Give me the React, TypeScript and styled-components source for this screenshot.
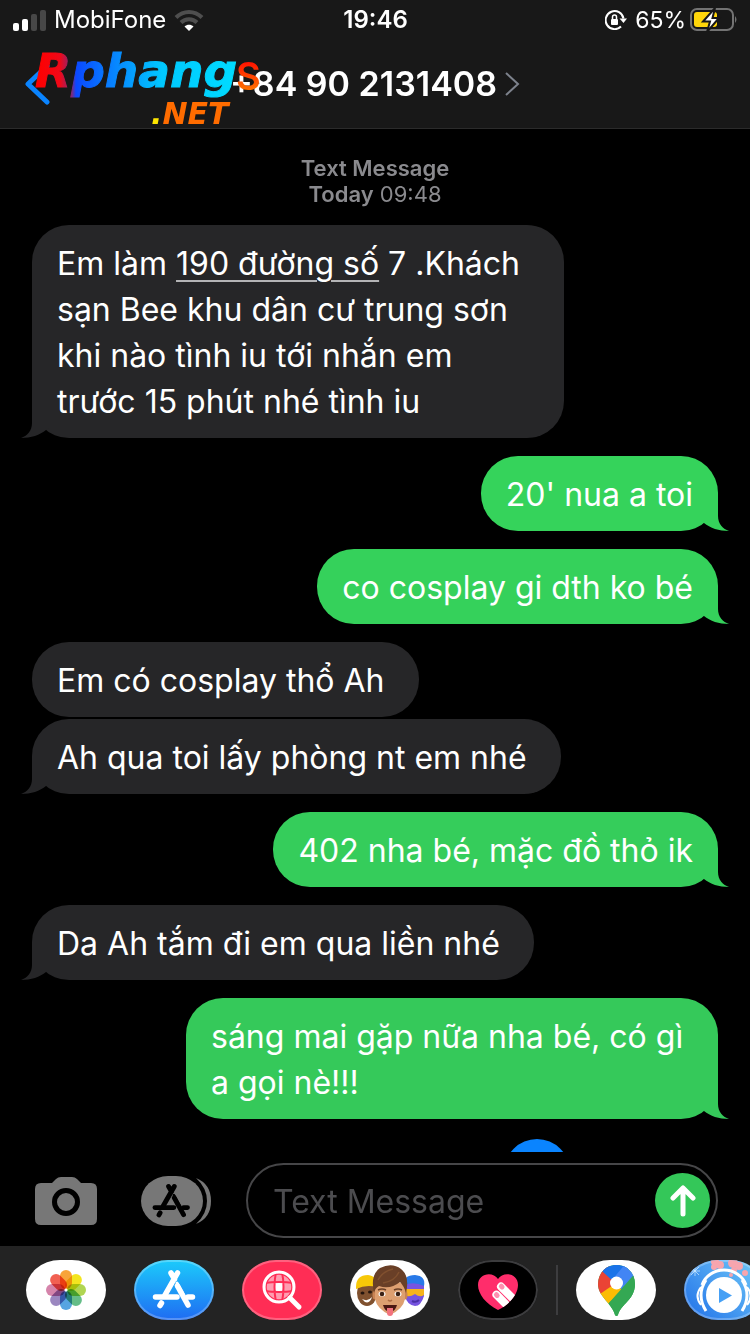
import React from "react";
import styled, { createGlobalStyle } from "styled-components";

const GlobalStyle = createGlobalStyle`
  * { box-sizing: border-box; }
  html, body { margin: 0; background: #000; }
  body { font-family: Inter, "Noto Sans", sans-serif; color: #fff; }
  button { border: 0; padding: 0; background: none; color: inherit; font: inherit; cursor: pointer; }
  svg { display: block; }
`;

const Screen = styled.div`
  display: flex;
  flex-direction: column;
  min-height: 100vh;
  overflow: hidden;
`;

const Header = styled.header`
  position: relative;
  background: #181818;
  border-bottom: 1px solid #2b2b2b;
`;

const StatusBar = styled.div`
  display: grid;
  grid-template-columns: 1fr auto 1fr;
  align-items: center;
  height: 40px;
  padding: 0 12px 0 13px;
  font-size: 24px;
  line-height: 40px;
`;

const StatusGroup = styled.div<{ $end?: boolean }>`
  display: flex;
  align-items: center;
  justify-content: ${(p) => (p.$end ? "flex-end" : "flex-start")};
  gap: ${(p) => (p.$end ? "4px" : "8px")};
`;

const BatteryLevel = styled.span`
  margin-left: 4px;
  font-size: 23px;
`;

const Clock = styled.time`
  font-weight: 600;
`;

const NavBar = styled.nav`
  display: grid;
  grid-template-columns: 1fr auto 1fr;
  align-items: center;
  height: 88px;
  padding: 0 25px;
`;

const BackButton = styled.button`
  justify-self: start;
`;

const ContactButton = styled.button`
  display: flex;
  align-items: center;
  gap: 8px;
`;

const ContactName = styled.h1`
  margin: 0;
  font-size: 34px;
  line-height: 44px;
  font-weight: 600;
`;

const Watermark = styled.svg`
  position: absolute;
  left: 24px;
  top: 44px;
  pointer-events: none;
`;

const Thread = styled.main`
  flex: 1;
  display: flex;
  flex-direction: column;
  padding: 26px 32px 0;
`;

const DayLabel = styled.div`
  margin-bottom: 18px;
  color: #8a8a8e;
  font-size: 22px;
  line-height: 26px;
  text-align: center;
`;

const Strong = styled.span`
  font-weight: 600;
`;

const Bubble = styled.div<{ $sent?: boolean; $joined?: boolean; $fill: string }>`
  position: relative;
  align-self: ${(p) => (p.$sent ? "flex-end" : "flex-start")};
  max-width: 532px;
  margin-bottom: ${(p) => (p.$joined ? "2px" : "18px")};
  padding: ${(p) => (p.$sent ? "16px 25px 13px" : "16px 34px 13px 25px")};
  border-radius: 37px;
  background: ${(p) => p.$fill};
  font-size: 32px;
  line-height: 46px;
`;

const Tail = styled.svg<{ $sent?: boolean }>`
  position: absolute;
  bottom: 0;
  ${(p) => (p.$sent ? "right: -11px;" : "left: -11px; transform: scaleX(-1);")}
`;

const AddressLink = styled.a`
  color: inherit;
  text-decoration: underline;
  text-decoration-color: #b4b4b6;
  text-decoration-thickness: 2px;
  text-underline-offset: 5px;
`;

const NextAction = styled.div`
  align-self: flex-end;
  height: 13px;
  margin: 2px 148px 0 0;
  overflow: hidden;
`;

const RoundAction = styled.button`
  display: block;
  width: 66px;
  height: 66px;
  border-radius: 50%;
  background: #0a84ff;
`;

const Composer = styled.form`
  display: flex;
  align-items: center;
  padding: 11px 32px 8px 35px;
`;

const ToolButton = styled.button<{ $gap: number }>`
  margin-right: ${(p) => p.$gap}px;
`;

const Field = styled.div`
  flex: 1;
  min-width: 0;
  display: flex;
  align-items: center;
  height: 75px;
  padding: 0 6px 0 25px;
  border: 2px solid #464648;
  border-radius: 38px;
`;

const TextInput = styled.input`
  flex: 1;
  min-width: 0;
  border: 0;
  padding: 2px 0 0;
  outline: 0;
  background: none;
  color: #fff;
  font: inherit;
  font-size: 32px;
  line-height: 46px;
  &::placeholder { color: #4c4c4f; opacity: 1; }
`;

const SendButton = styled.button`
  display: grid;
  place-items: center;
  width: 55px;
  height: 55px;
  border-radius: 50%;
  background: #34c759;
`;

const AppStrip = styled.footer`
  display: flex;
  align-items: center;
  padding: 14px 0 14px 26px;
  background: #232323;
  overflow: hidden;
`;

const AppGroup = styled.div`
  display: flex;
  flex-shrink: 0;
  gap: 28px;
`;

const Divider = styled.div`
  flex-shrink: 0;
  width: 2px;
  height: 50px;
  margin: 0 18px;
  background: #3d3d3f;
`;

const AppButton = styled.button<{ $bg: string; $ring?: string }>`
  flex-shrink: 0;
  width: 80px;
  height: 60px;
  border-radius: 34px / 30px;
  overflow: hidden;
  background: ${(p) => p.$bg};
  box-shadow: inset 0 0 0 2px ${(p) => p.$ring || "transparent"};
`;

const SignalIcon = () => (
  <svg width="33" height="21" aria-hidden="true">
    <rect x="0" y="13" width="6" height="8" rx="2" fill="#fff" />
    <rect x="9" y="9" width="6" height="12" rx="2" fill="#fff" />
    <rect x="18" y="4" width="6" height="17" rx="2" fill="#474747" />
    <rect x="27" y="0" width="6" height="21" rx="2" fill="#474747" />
  </svg>
);

const WifiIcon = () => (
  <svg width="30" height="22" viewBox="0 0 30 22" fill="none" aria-hidden="true">
    <path d="M2 8.5C9.500 1 20.500 1 28 8.500" stroke="#4e4e4e" strokeWidth="4" />
    <path d="M7 13.500C11.500 9 18.500 9 23 13.500" stroke="#4e4e4e" strokeWidth="4" />
    <path d="M10.500 17.500C13 15 17 15 19.500 17.500L15 22Z" fill="#fff" />
  </svg>
);

const LockIcon = () => (
  <svg width="22" height="20" viewBox="0 0 22 20" fill="none" aria-hidden="true">
    <path d="M16 16.500A9 9 0 1 1 18.500 8.500" stroke="#fff" strokeWidth="2" />
    <path d="M14.500 8.500H22L18.500 13Z" fill="#fff" />
    <rect x="6" y="9" width="7" height="6" rx="1" fill="#fff" />
    <path d="M7.500 9V7A2 2 0 0 1 11.500 7V9" stroke="#fff" strokeWidth="1.500" />
  </svg>
);

const BatteryIcon = () => (
  <svg width="48" height="24" viewBox="0 0 48 24" aria-hidden="true">
    <rect x="1" y="1" width="42" height="21" rx="6" fill="none" stroke="#737373" strokeWidth="2" />
    <path d="M45 8Q48 11.500 45 15Z" fill="#737373" />
    <rect x="4" y="4" width="23" height="15" rx="3" fill="#ffd60a" />
    <path d="M25 0L13 13.500H20L17 24L29 10H22.500Z" fill="#fff" stroke="#181818" strokeWidth="2" />
  </svg>
);

const WatermarkLogo = () => (
  <Watermark width="240" height="86" viewBox="0 0 240 86" role="img" aria-label="Rphangs.NET">
    <defs>
      <linearGradient id="wmMain" gradientUnits="userSpaceOnUse" x1="14" y1="0" x2="214" y2="0">
        <stop offset="0" stopColor="#ff0000" />
        <stop offset="0.110" stopColor="#f00818" />
        <stop offset="0.170" stopColor="#7a2a80" />
        <stop offset="0.190" stopColor="#0a48ff" />
        <stop offset="0.350" stopColor="#087cff" />
        <stop offset="0.620" stopColor="#00c8ff" />
        <stop offset="1" stopColor="#00dcff" />
      </linearGradient>
      <linearGradient id="wmS" x1="0" y1="0" x2="0" y2="1">
        <stop offset="0.200" stopColor="#ff1200" />
        <stop offset="0.850" stopColor="#ff7a00" />
      </linearGradient>
    </defs>
    <g fontFamily="'DejaVu Sans', sans-serif" fontWeight="700" fontStyle="italic">
      <text x="11" y="43" fontSize="47" fill="url(#wmMain)" stroke="url(#wmMain)" strokeWidth="1">Rphang</text>
      <text x="127" y="80" fontSize="30" fill="#ff6c00"><tspan fill="#ffe600">.</tspan>NET</text>
    </g>
    <text x="212" y="46" fontSize="38" fontFamily="Inter, sans-serif" fontWeight="600" fill="url(#wmS)">S</text>
  </Watermark>
);

const StoreGlyph = ({ color }: { color: string }) => (
  <g fill="none" stroke={color} strokeWidth="5.500" strokeLinecap="round">
    <path d="M37 13L40.500 19M43.500 13L31 35" />
    <path d="M21.500 37H43M54 37H58.500" />
    <path d="M27.500 43L26 45.500" />
    <path d="M43.500 26L54 45" />
    <path d="M43 23L50 36" strokeWidth="3" />
  </g>
);

const PhotosIcon = () => {
  const petals = ["#f8981d", "#f2e200", "#a5cf3a", "#4fb477", "#3f97dd", "#8d76b8", "#d0739f", "#ef4a3a"];
  return (
    <svg width="80" height="60" aria-hidden="true">
      {petals.map((c, i) => (
        <rect key={c} x="34" y="10" width="12" height="19" rx="6" fill={c} opacity="0.880"
          transform={`rotate(${i * 45} 40 30)`} style={{ mixBlendMode: "multiply" }} />
      ))}
      <circle cx="40" cy="30" r="1.500" fill="#fff" />
    </svg>
  );
};

const ImagesIcon = () => (
  <svg width="80" height="60" fill="none" aria-hidden="true">
    <circle cx="37" cy="27" r="14" fill="#ff9db0" />
    <path d="M33 22H41V32H33Z" fill="#fff" />
    <path d="M34 12Q31 27 34 42M40 12Q43 27 40 42M22 23Q37 21 52 23M22 31Q37 33 52 31" stroke="#ff2d55" strokeWidth="2" />
    <circle cx="37" cy="27" r="13" stroke="#ff2d55" strokeWidth="1.500" />
    <circle cx="37" cy="27" r="15" stroke="#fff" strokeWidth="3" />
    <path d="M48 38L57 47" stroke="#fff" strokeWidth="5" strokeLinecap="round" />
  </svg>
);

const MemojiIcon = () => (
  <svg width="80" height="60" aria-hidden="true">
    <ellipse cx="17" cy="33" rx="10" ry="13" fill="#80512f" />
    <path d="M6 27Q6 15 18 15Q28 16 27 27Q16 24 6 29Z" fill="#f7c808" />
    <ellipse cx="12.500" cy="33" rx="2" ry="1.500" fill="#24150e" />
    <ellipse cx="20" cy="32" rx="2" ry="1.500" fill="#24150e" />
    <path d="M12 39Q18 42 22 37Q20 44 15 42Z" fill="#fff" />
    <path d="M55 29Q55 17 64 16Q75 16 74 28V36Q71 46 65 46Q57 45 55 36Z" fill="#7654e0" />
    <path d="M54 25Q53 15 65 15Q76 16 74 26Q64 21 54 25Z" fill="#2879e8" />
    <path d="M55 29H74V35Q70 38 65 34Q59 38 55 35Z" fill="#f6b31c" />
    <path d="M62 41Q66 43 69 40" stroke="#4a31a8" strokeWidth="2" fill="none" />
    <ellipse cx="25" cy="35" rx="2.500" ry="4.500" fill="#c98354" />
    <ellipse cx="55" cy="35" rx="2.500" ry="4.500" fill="#c98354" />
    <path d="M25 25Q40 16 55 25V39Q53 49 40 55Q27 49 25 39Z" fill="#dd9f70" />
    <path d="M24 33Q20 15 30 8Q42 2 51 9Q60 16 56 33Q54 26 50 22Q40 30 29 26Q25 28 24 33Z" fill="#693f27" />
    <path d="M28 20Q33 11 43 9M33 23Q45 21 49 12" stroke="#80502f" strokeWidth="1.500" fill="none" />
    <ellipse cx="32" cy="34" rx="3.500" ry="2.500" fill="#fff" />
    <ellipse cx="48" cy="34" rx="3.500" ry="2.500" fill="#fff" />
    <circle cx="32" cy="34" r="2.300" fill="#3c2114" />
    <circle cx="48" cy="34" r="2.300" fill="#3c2114" />
    <path d="M28 30Q32 28 36 30M44 30Q48 28 52 30" stroke="#693f27" strokeWidth="1.500" fill="none" />
    <path d="M38 40Q40 42 42 40" stroke="#b06c42" strokeWidth="1.500" fill="none" />
    <path d="M33 45H47Q45 52 40 52Q35 52 33 45Z" fill="#4b1712" />
    <path d="M37 48H43V53Q43 56 40 56Q37 56 37 53Z" fill="#f2727d" />
  </svg>
);

const TouchIcon = () => (
  <svg width="80" height="60" aria-hidden="true">
    <defs>
      <clipPath id="heartClip">
        <path d="M40 50C28 44 20 34 20 25C20 13 35 11 40 19C45 11 60 13 60 25C60 34 52 44 40 50Z" />
      </clipPath>
    </defs>
    <g clipPath="url(#heartClip)">
      <rect width="80" height="60" fill="#ff2d6b" />
      <g transform="rotate(-45 43.700 26.300)">
        <rect x="39" y="22" width="8" height="34" rx="4" fill="#fff" />
        <rect x="41" y="23.500" width="5" height="6" rx="2.500" fill="#ff8fb0" />
      </g>
      <g transform="rotate(-45 38.700 34.700)">
        <rect x="34.500" y="30.500" width="8" height="34" rx="4" fill="#fff" />
        <rect x="36" y="32" width="5" height="6" rx="2.500" fill="#ff8fb0" />
      </g>
    </g>
  </svg>
);

const MapsIcon = () => (
  <svg width="80" height="60" aria-hidden="true">
    <defs>
      <clipPath id="pinClip">
        <path d="M22 24C22 13 30 5 40.500 5C51 5 59 13 59 24C59 32 55 38 50 43C45 48 43 51 42 55Q40.500 57 39 55C38 51 36 48 32 43C26 36 22 31 22 24Z" />
      </clipPath>
    </defs>
    <g clipPath="url(#pinClip)">
      <rect width="80" height="60" fill="#34a853" />
      <path d="M20 36L40 16L48 28L31 45L20 50Z" fill="#fbbc04" />
      <path d="M10 0H30L40 23L24 34L10 40Z" fill="#ea4335" />
      <path d="M20 5L60 0L40 24L27 12Z" fill="#1a73e8" />
      <path d="M50 3L36 20L46 30L62 14Z" fill="#4285f4" />
      <path d="M62 10L25 52L50 60L70 30Z" fill="#34a853" />
    </g>
    <circle cx="40.500" cy="23" r="6.500" fill="#fff" />
  </svg>
);

const MusicIcon = () => (
  <svg width="80" height="60" fill="none" aria-hidden="true">
    <g fill="#f7a5ae">
      <circle cx="31" cy="2" r="4" /><circle cx="36" cy="5" r="4" /><circle cx="30" cy="7" r="3" />
      <circle cx="49" cy="3" r="5" /><circle cx="55" cy="6" r="4" /><circle cx="50" cy="10" r="3" />
      <circle cx="61" cy="13" r="3" /><circle cx="47" cy="15" r="2" />
    </g>
    <path d="M11 6V16M6 11H16M7 7L15 15M15 7L7 15" stroke="#d0edff" strokeWidth="1" opacity="0.700" />
    <path d="M18 25A23 21 0 0 1 62 25" stroke="#fff" strokeWidth="3" />
    <path d="M22 20Q12 35 22 51M58 20Q68 35 58 51" stroke="#fff" strokeWidth="3" />
    <path d="M17 27Q10 36 17 45M63 27Q70 36 63 45" stroke="#fff" strokeWidth="2" />
    <circle cx="40" cy="35" r="18" fill="#fff" />
    <path d="M35 28L48 35.500L35 43Z" fill="#46a0f5" />
  </svg>
);

type Message = { text: React.ReactNode; sent?: boolean; joined?: boolean; fill: string };

const GRAY = "#262628";

const messages: Message[] = [
  {
    fill: GRAY,
    text: (
      <>
        Em làm <AddressLink href="#address">190 đường số</AddressLink> 7 .Khách sạn Bee khu dân cư trung sơn khi nào
        tình iu tới nhắn em trước 15 phút nhé tình iu
      </>
    ),
  },
  { sent: true, fill: "#35d35b", text: "20' nua a toi" },
  { sent: true, fill: "#35d15b", text: "co cosplay gi dth ko bé" },
  { joined: true, fill: GRAY, text: "Em có cosplay thổ Ah" },
  { fill: GRAY, text: "Ah qua toi lấy phòng nt em nhé" },
  { sent: true, fill: "#35cd5b", text: "402 nha bé, mặc đồ thỏ ik" },
  { fill: GRAY, text: "Da Ah tắm đi em qua liền nhé" },
  { sent: true, fill: "#35c95a", text: "sáng mai gặp nữa nha bé, có gì a gọi nè!!!" },
];

export default function App() {
  return (
    <Screen>
      <GlobalStyle />
      <Header>
        <StatusBar>
          <StatusGroup>
            <SignalIcon />
            <span>MobiFone</span>
            <WifiIcon />
          </StatusGroup>
          <Clock>19:46</Clock>
          <StatusGroup $end>
            <LockIcon />
            <BatteryLevel>65%</BatteryLevel>
            <BatteryIcon />
          </StatusGroup>
        </StatusBar>
        <NavBar>
          <BackButton type="button" aria-label="Back">
            <svg width="26" height="44" fill="none" aria-hidden="true">
              <path d="M22 4L3 22L22 40" stroke="#0a84ff" strokeWidth="5" strokeLinecap="round" strokeLinejoin="round" />
            </svg>
          </BackButton>
          <ContactButton type="button">
            <ContactName>+84 90 2131408</ContactName>
            <svg width="15" height="26" fill="none" aria-hidden="true">
              <path d="M1 2L13 13L1 24" stroke="#7d828c" strokeWidth="2" />
            </svg>
          </ContactButton>
        </NavBar>
        <WatermarkLogo />
      </Header>

      <Thread>
        <DayLabel>
          <Strong>Text Message</Strong>
          <br />
          <Strong>Today</Strong> 09:48
        </DayLabel>
        {messages.map((m, i) => (
          <Bubble key={i} $sent={m.sent} $joined={m.joined} $fill={m.fill}>
            {m.text}
            {!m.joined && (
              <Tail $sent={m.sent} width="29" height="37" aria-hidden="true">
                <path d="M0 0H18V22C18 30 23 35 29 37C19 37 10 34 4 29L0 26Z" fill={m.fill} />
              </Tail>
            )}
          </Bubble>
        ))}
        <NextAction>
          <RoundAction type="button" aria-label="Open attachment" />
        </NextAction>
      </Thread>

      <Composer onSubmit={(e) => e.preventDefault()}>
        <ToolButton type="button" $gap={44} aria-label="Camera">
          <svg width="62" height="48" aria-hidden="true">
            <path d="M6 6H17L21 2Q23 0 26 0H37Q40 0 42 2L46 6H56Q62 6 62 12V42Q62 48 56 48H6Q0 48 0 42V12Q0 6 6 6Z" fill="#777" />
            <circle cx="31" cy="25" r="11.500" fill="none" stroke="#000" strokeWidth="5" />
          </svg>
        </ToolButton>
        <ToolButton type="button" $gap={35} aria-label="Apps">
          <svg width="70" height="50" viewBox="0 0 70 50" aria-hidden="true">
            <path d="M55 2Q70 8 70 25Q70 42 55 48Q66 38 66 25Q66 12 55 2Z" fill="#777" />
            <rect width="62" height="50" rx="27" ry="25" fill="#777" />
            <g transform="translate(-5 -1) scale(0.880)"><StoreGlyph color="#000" /></g>
          </svg>
        </ToolButton>
        <Field>
          <TextInput type="text" aria-label="Message" placeholder="Text Message" />
          <SendButton type="submit" aria-label="Send">
            <svg width="26" height="32" fill="none" aria-hidden="true">
              <path d="M13 29V4M3 13L13 3L23 13" stroke="#fff" strokeWidth="5" strokeLinecap="round" strokeLinejoin="round" />
            </svg>
          </SendButton>
        </Field>
      </Composer>

      <AppStrip>
        <AppGroup>
          <AppButton type="button" aria-label="Photos" $bg="#fff"><PhotosIcon /></AppButton>
          <AppButton type="button" aria-label="App Store" $bg="linear-gradient(#1ccbfb, #1f6cf2)" $ring="rgba(255,255,255,0.25)">
            <svg width="80" height="60" aria-hidden="true"><StoreGlyph color="#fff" /></svg>
          </AppButton>
          <AppButton type="button" aria-label="Images" $bg="#ff2d55" $ring="rgba(255,255,255,0.25)"><ImagesIcon /></AppButton>
          <AppButton type="button" aria-label="Memoji" $bg="#fff"><MemojiIcon /></AppButton>
          <AppButton type="button" aria-label="Digital Touch" $bg="#000" $ring="#3c3c3e"><TouchIcon /></AppButton>
        </AppGroup>
        <Divider />
        <AppGroup>
          <AppButton type="button" aria-label="Maps" $bg="#fff"><MapsIcon /></AppButton>
          <AppButton type="button" aria-label="Music" $bg="linear-gradient(45deg, #1f6fe8, #74cdf9)" $ring="rgba(255,255,255,0.25)"><MusicIcon /></AppButton>
        </AppGroup>
      </AppStrip>
    </Screen>
  );
}
